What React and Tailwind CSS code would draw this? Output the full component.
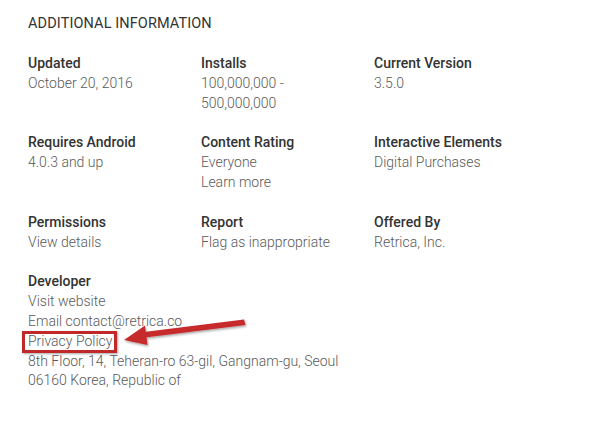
import React from 'react';

const ITEMS = [
  { label: 'Updated', lines: ['October 20, 2016'] },
  { label: 'Installs', lines: ['100,000,000 -', '500,000,000'] },
  { label: 'Current Version', lines: ['3.5.0'] },
  { label: 'Requires Android', lines: ['4.0.3 and up'] },
  { label: 'Content Rating', lines: ['Everyone', 'Learn more'] },
  { label: 'Interactive Elements', lines: ['Digital Purchases'] },
  { label: 'Permissions', lines: ['View details'] },
  { label: 'Report', lines: ['Flag as inappropriate'] },
  { label: 'Offered By', lines: ['Retrica, Inc.'] },
];

function Item({ label, children }) {
  return (
    <div className="flex flex-col">
      <span className="font-medium text-[#333]">{label}</span>
      {children}
    </div>
  );
}

function Value({ children }) {
  return <span className="font-light text-[#5a5a5a] whitespace-nowrap">{children}</span>;
}

export default function App() {
  return (
    <div
      className="relative w-[607px] h-[422px] bg-white overflow-hidden pl-[28px] pt-[14px] text-[14px] leading-[19.8px]"
      style={{ fontFamily: 'Roboto, "Liberation Sans", sans-serif' }}
    >
      <h2 className="text-[14.5px] leading-[20px] font-normal text-[#333] tracking-[0.1px]">
        ADDITIONAL INFORMATION
      </h2>

      <div className="mt-[20px] grid grid-cols-[173px_173px_173px] gap-y-[20px]">
        {ITEMS.map((item) => (
          <Item key={item.label} label={item.label}>
            {item.lines.map((l) => (
              <Value key={l}>{l}</Value>
            ))}
          </Item>
        ))}

        <Item label="Developer">
          <Value>Visit website</Value>
          <Value>Email contact@retrica.co</Value>
          <span className="relative self-start">
            <Value>Privacy Policy</Value>
            {/* highlight box */}
            <span className="absolute left-[-6px] right-[-5px] top-[-1px] bottom-[-1px] border-[3px] border-[#c0282a] shadow-[1px_1px_2px_rgba(0,0,0,0.35)]" />
          </span>
          <Value>8th Floor, 14, Teheran-ro 63-gil, Gangnam-gu, Seoul</Value>
          <Value>06160 Korea, Republic of</Value>
        </Item>
      </div>

      {/* arrow */}
      <svg className="absolute left-0 top-0 pointer-events-none" width="607" height="422">
        <defs>
          <filter id="sh" x="-10%" y="-50%" width="120%" height="200%">
            <feDropShadow dx="1" dy="1.5" stdDeviation="1.2" floodColor="#000" floodOpacity="0.35" />
          </filter>
        </defs>
        <g filter="url(#sh)" fill="#c62a2a" stroke="none">
          <path d="M244 319.5 L245.5 325 L145 337.5 L144 332 Z" />
          <path d="M124 340 L145 325.5 L147.5 345 Z" />
        </g>
      </svg>
    </div>
  );
}
